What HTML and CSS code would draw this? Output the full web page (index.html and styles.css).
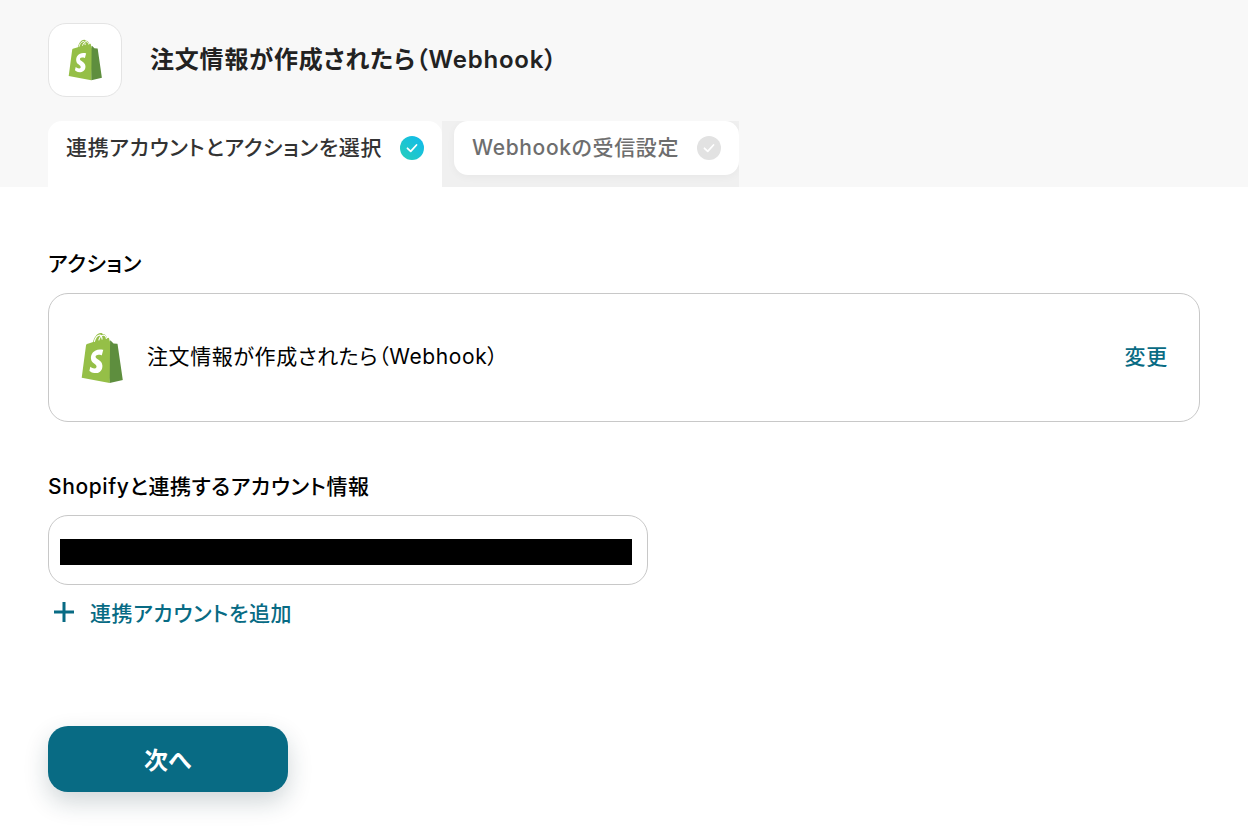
FILE: index.html
```html
<!DOCTYPE html>
<html lang="ja">
<head>
	<meta charset="UTF-8">
	<title>注文情報が作成されたら(Webhook)</title>
	<link rel="stylesheet" href="styles.css">
</head>
<body>
	<svg class="defs" width="0" height="0" aria-hidden="true">
		<symbol id="shopify" viewBox="0 0 44 50">
			<path d="M30.5 5.600l-1.500.5c-.7-2.200-1.800-3.900-3.700-3.900h-.4C24.300 1.300 23.600 1 22.900 1c-4.600 0-6.900 5.800-7.600 8.700l-5 1.500c-1.500.5-1.600.5-1.800 2L4.400 44l26.900 5 2-33.600z" fill="#95bf47"/>
			<path d="M31.300 49L44 46.200S39 11.900 38.900 11.700c0-.3-.3-.4-.5-.4l-3.400-.3-2.600-2.600c-.2-.2-.5-.2-.7-.1z" fill="#5e8e3e"/>
			<path d="M25 17.500l-1.300 5s-1.500-.7-3.300-.6c-2.600.2-2.700 1.800-2.600 2.200.1 2.300 6.100 2.800 6.500 8.100.3 4.200-2.200 7.100-5.800 7.300-4.300.3-6.700-2.300-6.700-2.300l.9-3.900s2.400 1.800 4.300 1.700c1.200-.1 1.700-1.100 1.700-1.800-.2-3-5.100-2.800-5.400-7.700-.3-4.100 2.400-8.300 8.400-8.700 2.300-.1 3.500.4 3.500.4" fill="#fff"/>
			<path d="M16.500 9.400c.8-3 2.600-6 5-6.400 1.500-.2 2.300 1.300 2.500 4.200M20.800 8c.7-2.500 2-4.600 4-4.900 2-.2 3.200 1.700 3.400 3.500" fill="none" stroke="#fff" stroke-width="1.100"/>
		</symbol>
	</svg>

	<header class="page-head">
		<div class="head-title">
			<div class="logo-box">
				<svg class="logo-small"><use href="#shopify"/></svg>
			</div>
			<h1>注文情報が作成されたら（Webhook）</h1>
		</div>
		<nav class="tabs">
			<div class="tab tab-active">
				<span>連携アカウントとアクションを選択</span>
				<svg class="check" viewBox="0 0 24 24">
					<defs>
						<linearGradient id="check-grad" x1="0" y1="1" x2="1" y2="0">
							<stop offset="0" stop-color="#27cfb9"/>
							<stop offset="1" stop-color="#0fb9ee"/>
						</linearGradient>
					</defs>
					<circle cx="12" cy="12" r="12" fill="url(#check-grad)"/>
					<path d="M7.500 12.300l3.200 3 5.800-6.300" fill="none" stroke="#fff" stroke-width="1.800" stroke-linecap="round" stroke-linejoin="round"/>
				</svg>
			</div>
			<div class="tab-slot">
				<div class="tab tab-idle">
					<span>Webhookの受信設定</span>
					<svg class="check" viewBox="0 0 24 24">
						<circle cx="12" cy="12" r="12" fill="#e2e2e2"/>
						<path d="M7.500 12.300l3.200 3 5.800-6.300" fill="none" stroke="#fff" stroke-width="1.800" stroke-linecap="round" stroke-linejoin="round"/>
					</svg>
				</div>
			</div>
		</nav>
	</header>

	<main class="content">
		<section class="field field-action">
			<h2>アクション</h2>
			<div class="action-box">
				<svg class="logo-large"><use href="#shopify"/></svg>
				<span class="action-name">注文情報が作成されたら（Webhook）</span>
				<a class="link change-link">変更</a>
			</div>
		</section>

		<section class="field field-account">
			<h2>Shopifyと連携するアカウント情報</h2>
			<div class="account-select">
				<div class="redacted"></div>
			</div>
			<a class="link add-account">
				<svg class="plus" viewBox="0 0 22 22">
					<path d="M11 1v20M1 11h20" stroke="#086b84" stroke-width="3" fill="none"/>
				</svg>
				<span>連携アカウントを追加</span>
			</a>
		</section>

		<button class="next-btn">次へ</button>
	</main>
</body>
</html>
```

FILE: styles.css
```css
/* Base styles */
:root {
	--color-head: #f8f8f8;
	--color-border: #c8c8c8;
	--color-link: #086b84;
	--color-text: #000;
}

* {
	box-sizing: border-box;
}

body {
	margin: 0;
	background: #fff;
	color: var(--color-text);
	font-family: "Inter", "Noto Sans CJK JP", sans-serif;
	font-feature-settings: "palt";
}

.defs {
	display: block;
	height: 0;
}

/* Header */
.page-head {
	height: 187px;
	padding: 23px 48px 0;
	background: var(--color-head);
}

.head-title {
	display: flex;
	align-items: center;
	gap: 28px;
}

.logo-box {
	width: 74px;
	height: 74px;
	padding-right: 3px;
	padding-bottom: 1px;
	display: flex;
	align-items: center;
	justify-content: center;
	background: #fff;
	border: 1px solid #e4e4e4;
	border-radius: 18px;
}

.logo-small {
	width: 37px;
	height: 42px;
}

h1 {
	margin: 0;
	color: #222;
	font-size: 24px;
	font-weight: 600;
	letter-spacing: 0.8px;
	line-height: 32px;
}

/* Tabs */
.tabs {
	display: flex;
	margin-top: 24px;
	height: 66px;
}

.tab {
	display: flex;
	align-items: flex-start;
	font-size: 21px;
	font-weight: 500;
	letter-spacing: 0.65px;
	line-height: 28px;
}

.tab-active {
	width: 394px;
	height: 66px;
	padding: 13px 18px 0;
	justify-content: space-between;
	background: #fff;
	border-radius: 14px 14px 0 0;
	color: #333;
}

.tab-slot {
	width: 297px;
	padding-left: 12px;
	overflow: hidden;
	background: #f0f0f0;
}

.tab-idle {
	width: 285px;
	height: 54px;
	padding: 13px 18px 0;
	justify-content: space-between;
	background: #fff;
	border-radius: 14px;
	color: #6e6e6e;
	box-shadow: 0 2px 8px rgba(0, 0, 0, 0.04);
}

.check {
	width: 24px;
	height: 24px;
	margin-top: 2px;
	flex: none;
}

/* Form */
.content {
	padding: 0 48px 46px;
}

.field h2 {
	margin: 0;
	font-size: 21px;
	font-weight: 500;
	letter-spacing: 0.6px;
	line-height: 30px;
}

.field-action {
	padding-top: 62px;
}

.action-box {
	display: flex;
	align-items: center;
	height: 129px;
	margin-top: 14px;
	padding: 0 31px 0 28px;
	border: 1px solid var(--color-border);
	border-radius: 20px;
}

.logo-large {
	width: 46px;
	height: 52px;
}

.action-name {
	margin-left: 24px;
	margin-bottom: 5px;
	flex: 1;
	font-size: 21px;
	letter-spacing: 0.6px;
}

.link {
	color: var(--color-link);
	font-size: 21px;
	font-weight: 500;
	letter-spacing: 0.7px;
}

.change-link {
	margin-bottom: 5px;
}

.field-account {
	padding-top: 50px;
}

.account-select {
	width: 600px;
	height: 70px;
	margin-top: 13px;
	padding: 23px 15px 0 11px;
	border: 1px solid var(--color-border);
	border-radius: 20px;
}

.redacted {
	height: 26px;
	background: #000;
}

.add-account {
	display: flex;
	align-items: center;
	gap: 15px;
	margin-top: 12px;
	padding-left: 5px;
	letter-spacing: 0.6px;
}

.plus {
	width: 22px;
	height: 22px;
}

.next-btn {
	display: block;
	width: 240px;
	height: 66px;
	margin-top: 99px;
	padding-bottom: 3px;
	background: var(--color-link);
	border: 0;
	border-radius: 20px;
	color: #fff;
	font-family: inherit;
	font-size: 24px;
	font-weight: 700;
	box-shadow: 0 10px 24px rgba(20, 50, 60, 0.2);
}
```
